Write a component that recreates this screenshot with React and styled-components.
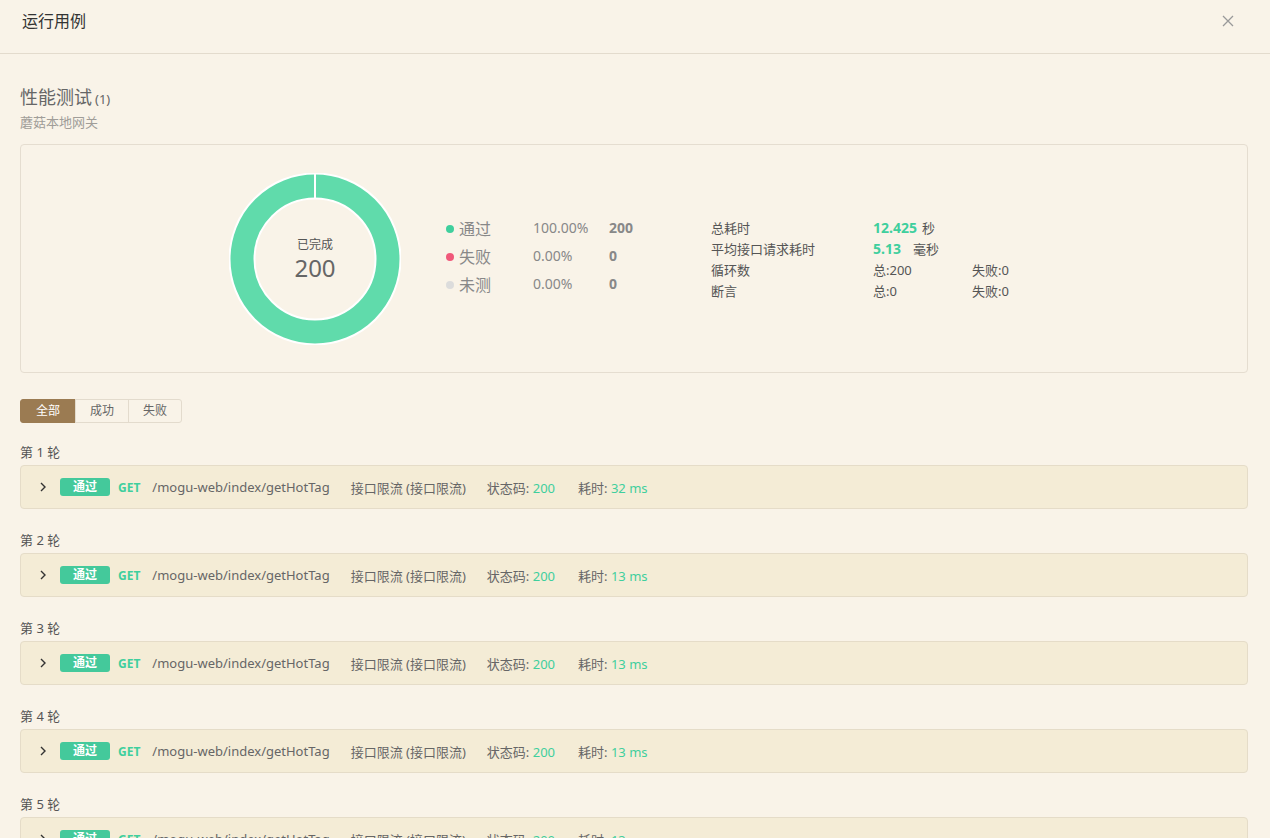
import React from 'react';
import styled, { createGlobalStyle } from 'styled-components';

const GlobalStyle = createGlobalStyle`
  html, body { margin: 0; padding: 0; background: #f9f3e8; }
  body {
    font-family: "Noto Sans", "Noto Sans CJK SC", sans-serif;
    color: #555;
    overflow: hidden;
  }
`;

const green = '#3fcf9d';

const Page = styled.div`
  width: 1270px;
  height: 838px;
  overflow: hidden;
  background: #f9f3e8;
`;

const Header = styled.div`
  height: 41px;
  display: flex;
  align-items: flex-start;
  justify-content: space-between;
  padding: 12px 36px 0 22px;
  border-bottom: 1px solid #e3dbcd;
  font-size: 16px;
  line-height: 18px;
  color: #333;
  .close { color: #999; display: flex; padding-top: 3px; }
`;

const Body = styled.div`
  padding: 30px 22px 0 20px;
`;

const SectionTitle = styled.div`
  font-size: 18px;
  line-height: 26px;
  color: #666;
  small { font-size: 13px; margin-left: 3px; }
`;

const SubTitle = styled.div`
  font-size: 13px;
  line-height: 20px;
  color: #a09d98;
`;

const SummaryCard = styled.div`
  margin-top: 12px;
  height: 227px;
  border: 1px solid #e5ddd0;
  border-radius: 4px;
  display: flex;
  align-items: center;
  padding-left: 208px;
`;

const Donut = styled.div`
  position: relative;
  width: 172px;
  height: 172px;
  flex: none;
`;

const DonutCenter = styled.div`
  position: absolute;
  inset: 0;
  display: flex;
  flex-direction: column;
  align-items: center;
  justify-content: center;
  color: #666;
  padding-top: 2px;
  span { font-size: 12px; line-height: 16px; color: #555; }
  b { font-size: 24px; line-height: 30px; font-weight: 400; }
`;

const Legend = styled.div`
  margin-left: 45px;
  margin-top: -6px;
  width: 220px;
`;

const LegendRow = styled.div`
  display: flex;
  align-items: center;
  height: 28px;
  color: #888;
  .dot {
    width: 8px; height: 8px; border-radius: 50%;
    background: ${p => p.$color};
    margin-right: 5px;
    margin-top: 3px;
  }
  .name { font-size: 16px; width: 74px; }
  .pct { font-size: 14px; width: 76px; }
  .count { font-size: 14px; font-weight: 700; }
`;

const Stats = styled.div`
  margin-left: 45px;
`;

const StatRow = styled.div`
  display: flex;
  align-items: center;
  height: 21px;
  font-size: 13px;
  color: #555;
  .label { width: 162px; }
  .value { width: 99px; }
`;

const Num = styled.b`
  color: ${green};
  font-size: 14px;
  font-weight: 700;
  margin-right: ${p => p.$gap}px;
`;

const Tabs = styled.div`
  display: flex;
  margin-top: 26px;
`;

const Tab = styled.div`
  height: 22px;
  line-height: 22px;
  padding: 0 14px;
  font-size: 12px;
  border: 1px solid ${p => (p.$active ? '#9b7b52' : '#e3dbcd')};
  margin-left: -1px;
  background: ${p => (p.$active ? '#9b7b52' : 'transparent')};
  color: ${p => (p.$active ? '#fff' : '#666')};
  &:first-child { margin-left: 0; padding: 0 15px; border-radius: 3px 0 0 3px; }
  &:last-child { border-radius: 0 3px 3px 0; }
`;

const Rounds = styled.div`
  margin-top: 19px;
`;

const Round = styled.div`
  margin-bottom: 21px;
`;

const RoundLabel = styled.div`
  font-size: 13px;
  line-height: 20px;
  color: #555;
  margin-bottom: 3px;
`;

const Collapse = styled.div`
  height: 42px;
  border: 1px solid #e5dcc8;
  border-radius: 4px;
  background: #f4ecd6;
  display: flex;
  align-items: center;
  padding-left: 17px;
  font-size: 13px;
  color: #666;
  .arrow { color: #333; display: flex; margin-right: 12px; }
`;

const Badge = styled.span`
  width: 50px;
  height: 18px;
  line-height: 18px;
  border-radius: 3px;
  background: #44c99b;
  color: #fff;
  font-size: 12px;
  font-weight: 700;
  text-align: center;
`;

const Part = styled.span`
  margin-left: ${p => p.$ml}px;
  color: ${p => p.$color || '#666'};
  font-weight: ${p => (p.$bold ? 700 : 400)};
  font-size: ${p => (p.$bold ? 12 : 13)}px;
  em { font-style: normal; color: ${green}; }
`;

const rounds = [
  { n: 1, ms: 32 },
  { n: 2, ms: 13 },
  { n: 3, ms: 13 },
  { n: 4, ms: 13 },
  { n: 5, ms: 13 },
];

const DonutChart = () => (
  <svg width="172" height="172" viewBox="0 0 172 172">
    <circle cx="86" cy="86" r="73" fill="none" stroke="#fff" strokeWidth="27" />
    <circle cx="86" cy="86" r="73" fill="none" stroke="#60dbab" strokeWidth="23" />
    <line x1="86" y1="0" x2="86" y2="26" stroke="#fff" strokeWidth="2" />
  </svg>
);

const App = () => (
  <Page>
    <GlobalStyle />
    <Header>
      <span>运行用例</span>
      <span className="close">
        <svg width="12" height="12" viewBox="0 0 12 12">
          <path d="M1 1L11 11M11 1L1 11" stroke="#999" strokeWidth="1.3" />
        </svg>
      </span>
    </Header>
    <Body>
      <SectionTitle>性能测试<small>(1)</small></SectionTitle>
      <SubTitle>蘑菇本地网关</SubTitle>
      <SummaryCard>
        <Donut>
          <DonutChart />
          <DonutCenter>
            <span>已完成</span>
            <b>200</b>
          </DonutCenter>
        </Donut>
        <Legend>
          <LegendRow $color="#3fcf9d">
            <i className="dot" /><span className="name">通过</span>
            <span className="pct">100.00%</span><span className="count">200</span>
          </LegendRow>
          <LegendRow $color="#f0587a">
            <i className="dot" /><span className="name">失败</span>
            <span className="pct">0.00%</span><span className="count">0</span>
          </LegendRow>
          <LegendRow $color="#dcdcdc">
            <i className="dot" /><span className="name">未测</span>
            <span className="pct">0.00%</span><span className="count">0</span>
          </LegendRow>
        </Legend>
        <Stats>
          <StatRow>
            <span className="label">总耗时</span>
            <span className="value"><Num $gap={5}>12.425</Num>秒</span>
          </StatRow>
          <StatRow>
            <span className="label">平均接口请求耗时</span>
            <span className="value"><Num $gap={12}>5.13</Num>毫秒</span>
          </StatRow>
          <StatRow>
            <span className="label">循环数</span>
            <span className="value">总:200</span>
            <span>失败:0</span>
          </StatRow>
          <StatRow>
            <span className="label">断言</span>
            <span className="value">总:0</span>
            <span>失败:0</span>
          </StatRow>
        </Stats>
      </SummaryCard>
      <Tabs>
        <Tab $active>全部</Tab>
        <Tab>成功</Tab>
        <Tab>失败</Tab>
      </Tabs>
      <Rounds>
        {rounds.map(r => (
          <Round key={r.n}>
            <RoundLabel>第 {r.n} 轮</RoundLabel>
            <Collapse>
              <span className="arrow">
                <svg width="10" height="10" viewBox="0 0 10 10">
                  <path d="M3 1L7 5L3 9" fill="none" stroke="#333" strokeWidth="1.4" />
                </svg>
              </span>
              <Badge>通过</Badge>
              <Part $ml={8} $bold $color={green}>GET</Part>
              <Part $ml={12}>/mogu-web/index/getHotTag</Part>
              <Part $ml={21}>接口限流 (接口限流)</Part>
              <Part $ml={21}>状态码: <em>200</em></Part>
              <Part $ml={23}>耗时: <em>{r.ms} ms</em></Part>
            </Collapse>
          </Round>
        ))}
      </Rounds>
    </Body>
  </Page>
);

export default App;
